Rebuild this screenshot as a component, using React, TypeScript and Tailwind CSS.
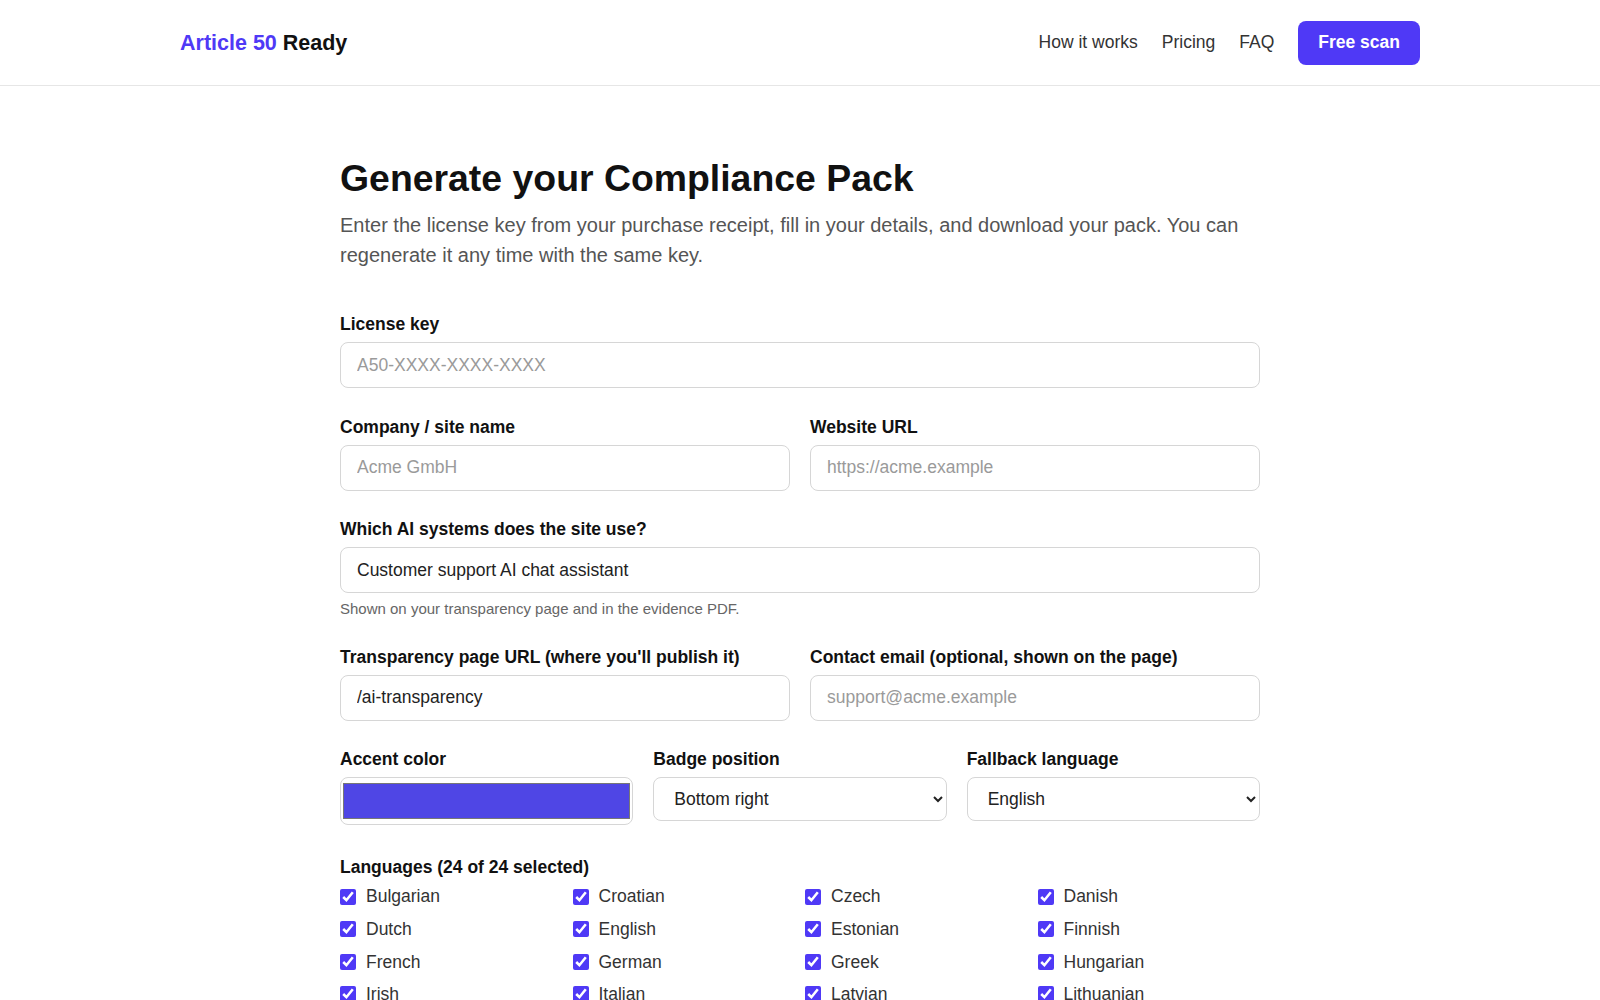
import React from "react";

const languages = [
  "Bulgarian", "Croatian", "Czech", "Danish",
  "Dutch", "English", "Estonian", "Finnish",
  "French", "German", "Greek", "Hungarian",
  "Irish", "Italian", "Latvian", "Lithuanian",
  "Maltese", "Polish", "Portuguese", "Romanian",
  "Slovak", "Slovenian", "Spanish", "Swedish",
];

function Label({ children }: { children: React.ReactNode }) {
  return <label className="block mb-2 text-[17.5px] leading-[20px] font-bold text-[#111]">{children}</label>;
}

const inputCls =
  "block w-full h-[46px] rounded-lg border border-[#d6d6d6] bg-white px-4 text-[17.5px] text-[#222] placeholder:text-[#9a9a9a] outline-none";

export default function App() {
  return (
    <div className="min-h-screen bg-white font-['Liberation_Sans',Arial,sans-serif] text-[#222]">
      <header className="h-[86px] border-b border-[#e6e6e6]">
        <div className="mx-auto flex h-full max-w-[1240px] items-center justify-between">
          <a className="pt-[2px] text-[21.5px] font-bold">
            <span className="text-indigo-600">Article 50</span> <span className="text-[#111]">Ready</span>
          </a>
          <nav className="flex items-center gap-6 text-[17.5px] text-[#333]">
            <a>How it works</a>
            <a>Pricing</a>
            <a>FAQ</a>
            <a className="flex h-11 items-center rounded-lg bg-indigo-600 px-5 font-bold text-white">Free scan</a>
          </nav>
        </div>
      </header>

      <main className="mx-auto max-w-[920px] pt-[70px] pb-20">
        <h1 className="text-[37.4px] leading-[45px] font-bold text-[#111]">Generate your Compliance Pack</h1>
        <p className="mt-[10px] text-[20px] leading-[29.5px] text-[#555]">
          Enter the license key from your purchase receipt, fill in your details, and download your pack. You can
          regenerate it any time with the same key.
        </p>

        <form className="mt-11 flex flex-col gap-[28.5px]">
          <div>
            <Label>License key</Label>
            <input className={inputCls} placeholder="A50-XXXX-XXXX-XXXX" />
          </div>

          <div className="grid grid-cols-2 gap-5">
            <div>
              <Label>Company / site name</Label>
              <input className={inputCls} placeholder="Acme GmbH" />
            </div>
            <div>
              <Label>Website URL</Label>
              <input className={inputCls} placeholder="https://acme.example" />
            </div>
          </div>

          <div>
            <Label>Which AI systems does the site use?</Label>
            <input className={inputCls} defaultValue="Customer support AI chat assistant" />
            <p className="mt-[6px] text-[15px] leading-[19px] text-[#666]">
              Shown on your transparency page and in the evidence PDF.
            </p>
          </div>

          <div className="grid grid-cols-2 gap-5">
            <div>
              <Label>Transparency page URL (where you'll publish it)</Label>
              <input className={inputCls} defaultValue="/ai-transparency" />
            </div>
            <div>
              <Label>Contact email (optional, shown on the page)</Label>
              <input className={inputCls} placeholder="support@acme.example" />
            </div>
          </div>

          <div className="grid grid-cols-3 items-start gap-5">
            <div>
              <Label>Accent color</Label>
              <input
                type="color"
                defaultValue="#4f46e5"
                className="block h-12 w-full cursor-pointer rounded-lg border border-[#d6d6d6] bg-white px-0 py-px"
              />
            </div>
            <div>
              <Label>Badge position</Label>
              <select
                defaultValue="bottom-right"
                className="block h-11 w-full rounded-lg border border-[#d6d6d6] bg-white px-4 text-[17.5px] text-[#222]"
              >
                <option value="bottom-right">Bottom right</option>
                <option value="bottom-left">Bottom left</option>
                <option value="top-right">Top right</option>
                <option value="top-left">Top left</option>
              </select>
            </div>
            <div>
              <Label>Fallback language</Label>
              <select
                defaultValue="English"
                className="block h-11 w-full rounded-lg border border-[#d6d6d6] bg-white px-4 text-[17.5px] text-[#222]"
              >
                {languages.map((l) => (
                  <option key={l} value={l}>{l}</option>
                ))}
              </select>
            </div>
          </div>

          <div className="mt-[3px]">
            <Label>Languages (24 of 24 selected)</Label>
            <div className="grid grid-cols-4 gap-x-2.5 gap-y-[8.6px]">
              {languages.map((l) => (
                <label key={l} className="flex h-6 items-center gap-2.5 text-[17.5px] text-[#333]">
                  <input type="checkbox" defaultChecked className="m-0 h-4 w-4 accent-indigo-600" />
                  <span>{l}</span>
                </label>
              ))}
            </div>
          </div>
        </form>
      </main>
    </div>
  );
}
